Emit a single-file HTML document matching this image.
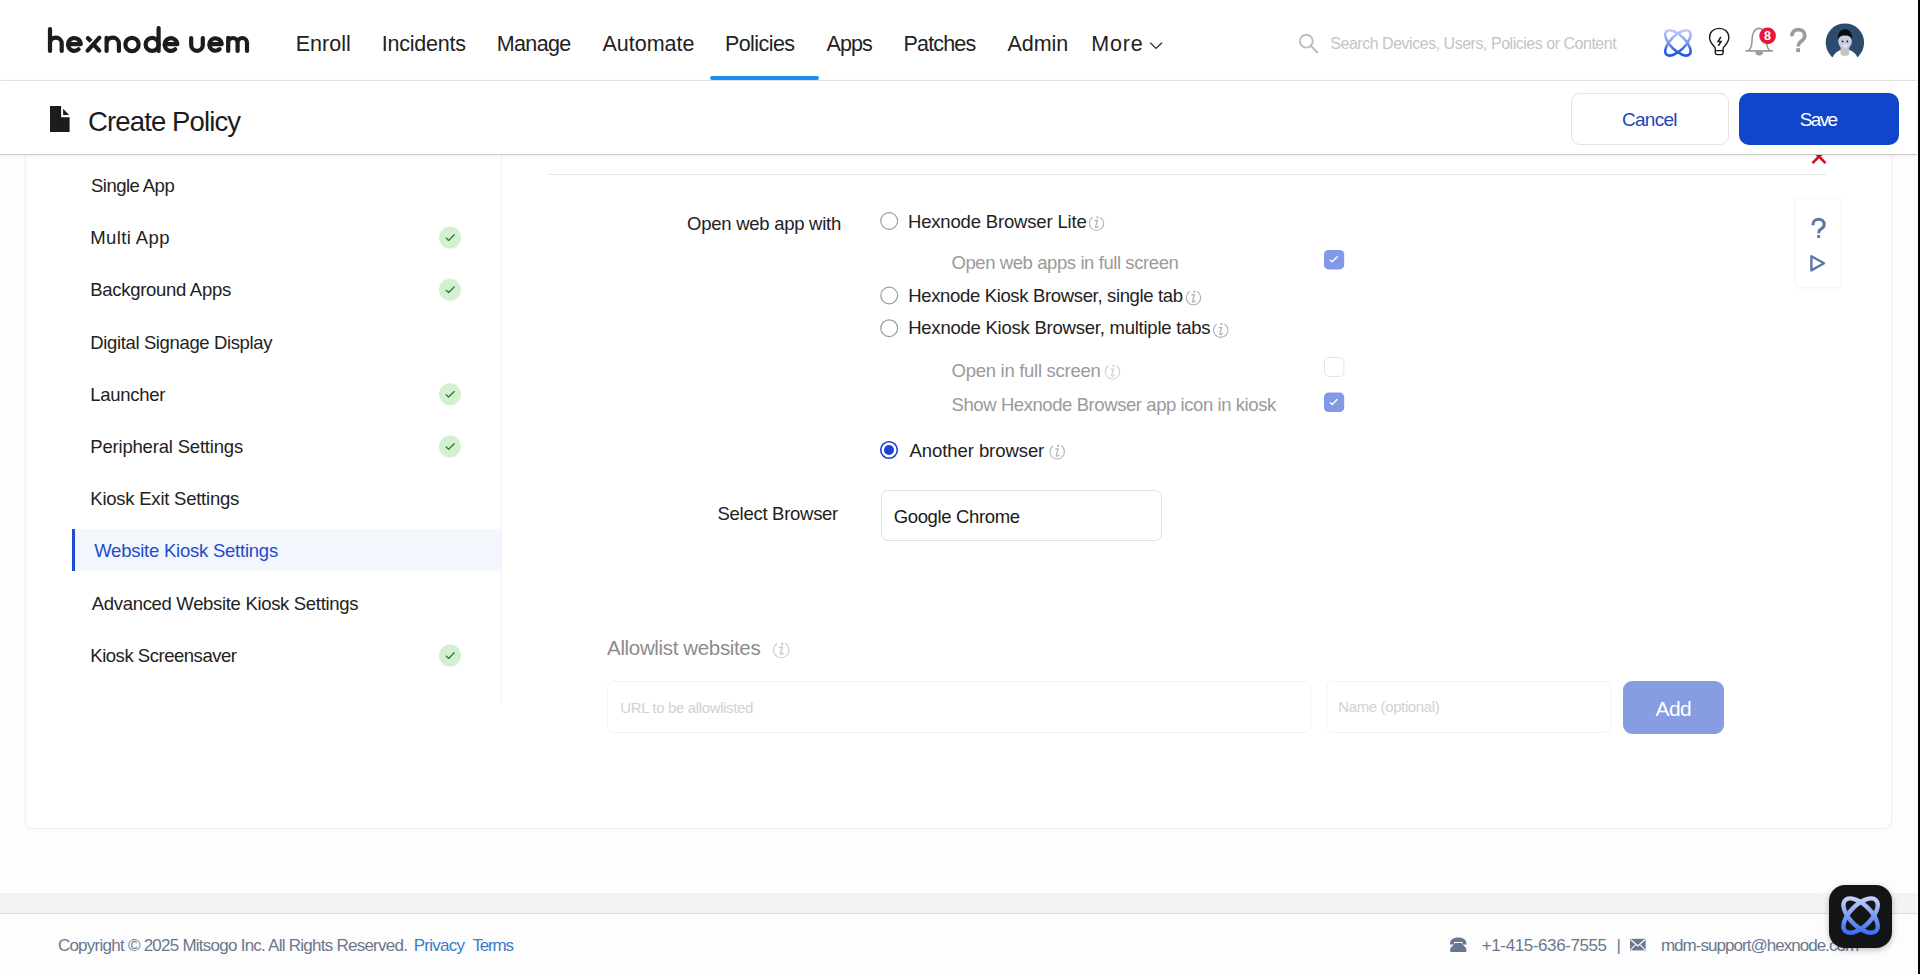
<!DOCTYPE html>
<html lang="en"><head><meta charset="utf-8"><title>Create Policy - Hexnode UEM</title>
<style>
html,body{margin:0;padding:0;}
body{width:1920px;height:974px;overflow:hidden;position:relative;background:#fdfdfd;font-family:"Liberation Sans",sans-serif;}
.a{position:absolute;box-sizing:border-box;}
.t{position:absolute;white-space:nowrap;line-height:1;font-family:"Liberation Sans",sans-serif;}
svg{position:absolute;overflow:visible;}
</style></head>
<body>
<!-- content card -->
<div class="a" style="left:25px;top:60px;width:1867px;height:769px;background:#fff;border:1px solid #efefef;border-radius:8px;box-shadow:0 0 2px rgba(0,0,0,0.05);"></div>
<!-- sidebar -->
<div class="a" style="left:501px;top:154px;width:1px;height:550px;background:#f2f2f2;"></div>
<div class="a" style="left:72px;top:529px;width:429px;height:42px;background:#f3f6fd;"></div>
<div class="a" style="left:72px;top:529px;width:3px;height:42px;background:#1f4bd6;"></div>
<svg width="1920" height="974" style="left:0;top:0;">
  <g fill="#d3f1d1">
    <circle cx="450" cy="237.6" r="11"/>
    <circle cx="450" cy="289.8" r="11"/>
    <circle cx="450" cy="394.3" r="11"/>
    <circle cx="450" cy="446.5" r="11"/>
    <circle cx="450" cy="655.6" r="11"/>
  </g>
  <g fill="none" stroke="#2f7d3c" stroke-width="1.35" stroke-linecap="round" stroke-linejoin="round">
    <path d="M446.2,238.1 L448.6,240.4 L454.2,234.8"/>
    <path d="M446.2,290.3 L448.6,292.6 L454.2,287.0"/>
    <path d="M446.2,394.8 L448.6,397.1 L454.2,391.5"/>
    <path d="M446.2,447.0 L448.6,449.3 L454.2,443.7"/>
    <path d="M446.2,656.1 L448.6,658.4 L454.2,652.8"/>
  </g>
</svg>
<!-- form -->
<div class="a" style="left:548px;top:174px;width:1278px;height:1px;background:#e4e4e4;"></div>
<svg width="1920" height="974" style="left:0;top:0;">
  <g fill="#fff" stroke="#9c9c9c" stroke-width="1.2">
    <circle cx="889.2" cy="221" r="8.4"/>
    <circle cx="889.2" cy="295.5" r="8.4"/>
    <circle cx="889.2" cy="328.2" r="8.4"/>
  </g>
  <circle cx="889" cy="450" r="8.3" fill="#fff" stroke="#1a45d4" stroke-width="1.6"/>
  <circle cx="889" cy="450" r="5" fill="#1a45d4"/>
  <!-- checkboxes -->
  <rect x="1324" y="250" width="20.2" height="19.4" rx="4.5" fill="#8199e6"/>
  <rect x="1324" y="392.6" width="20.2" height="19.4" rx="4.5" fill="#8199e6"/>
  <rect x="1324.5" y="357.5" width="19.4" height="19" rx="4.5" fill="#fff" stroke="#e2e2e2" stroke-width="1"/>
  <g fill="none" stroke="#fff" stroke-width="1.4" stroke-linecap="round" stroke-linejoin="round">
    <path d="M1330.2,260.1 L1332.2,261.8 L1337.2,256.8"/>
    <path d="M1330.2,402.7 L1332.2,404.4 L1337.2,399.4"/>
  </g>
</svg>
<div class="a" style="left:880.5px;top:490.2px;width:281px;height:50.6px;border:1px solid #e2e2e2;border-radius:7px;background:#fff;"></div>
<div class="a" style="left:607px;top:681.2px;width:704px;height:51.6px;border:1px solid #f3f3f3;border-radius:7px;background:#fff;"></div>
<div class="a" style="left:1325.6px;top:681.2px;width:286px;height:51.4px;border:1px solid #f3f3f3;border-radius:7px;background:#fff;"></div>
<div class="a" style="left:1623px;top:681.2px;width:100.5px;height:53.2px;border-radius:9px;background:#869de2;"></div>
<!-- help box -->
<div class="a" style="left:1795px;top:198px;width:46px;height:90px;border:1px solid #f6f6f6;border-radius:3px;background:#fff;box-shadow:0 0 4px rgba(0,0,0,0.035);"></div>
<svg width="1920" height="974" style="left:0;top:0;">
  <path d="M1812.9,225.2 C1812.9,221.2 1815.4,219.3 1818.5,219.3 C1821.8,219.3 1824.2,221.3 1824.2,224.4 C1824.2,227.4 1821.9,228.4 1820.3,229.6 C1819.1,230.5 1818.6,231.3 1818.6,233.3" fill="none" stroke="#5a7aa5" stroke-width="3.1"/>
  <rect x="1817.2" y="235" width="2.9" height="3" fill="#5a7aa5"/>
  <path d="M1811.4,256.3 L1824,263.3 L1811.4,270.4 Z" fill="none" stroke="#5a7aa5" stroke-width="2.4" stroke-linejoin="round"/>
</svg>
<!-- gray band + footer -->
<div class="a" style="left:0;top:893px;width:1917px;height:21px;background:#f3f3f3;border-bottom:1px solid #dcdcdc;"></div>
<div class="a" style="left:0;top:914px;width:1917px;height:60px;background:#fdfdfd;"></div>
<svg width="1920" height="974" style="left:0;top:0;">
  <!-- phone -->
  <path d="M1450,944.5 C1450,939.5 1453,937.5 1458.2,937.5 C1463.4,937.5 1466.5,939.5 1466.5,944.5 L1462.5,944.5 L1462.5,942 L1454,942 L1454,944.5 Z" fill="#6a788f"/>
  <path d="M1455,943 L1461.5,943 L1466.3,948.5 L1466.3,952 L1450.2,952 L1450.2,948.5 Z" fill="#6a788f"/>
  <!-- mail -->
  <rect x="1630" y="938.8" width="15.6" height="11.6" fill="#6a788f"/>
  <path d="M1630.6,939.6 L1637.8,946 L1645,939.6" fill="none" stroke="#fdfdfd" stroke-width="1.3"/>
  <path d="M1630.6,949.8 L1635.6,944.6 M1645,949.8 L1640,944.6" fill="none" stroke="#fdfdfd" stroke-width="1.1"/>
</svg>
<!-- red X (under sub header) -->
<svg width="1920" height="974" style="left:0;top:0;">
  <path d="M1812.5,150 L1825.5,163.2 M1825.5,150 L1812.5,163.2" stroke="#e0091c" stroke-width="2.6" fill="none"/>
</svg>
<!-- header -->
<div class="a" style="left:0;top:0;width:1917px;height:81px;background:#fff;border-bottom:1px solid #e4e4e4;"></div>
<div class="a" style="left:710px;top:76px;width:109px;height:4px;border-radius:2px;background:#1e8ff0;"></div>
<!-- sub header -->
<div class="a" style="left:0;top:81px;width:1917px;height:74px;background:#fff;border-bottom:1px solid #c9c9c9;box-shadow:0 1px 4px rgba(0,0,0,0.07);"></div>
<div class="a" style="left:1571px;top:93.4px;width:158px;height:51.2px;border:1px solid #e3e3e3;border-radius:9px;background:#fff;"></div>
<div class="a" style="left:1739px;top:93px;width:159.6px;height:51.6px;border-radius:10px;background:#0f46ca;"></div>
<svg width="1920" height="974" style="left:0;top:0;">
  <!-- logo -->
  <g fill="none" stroke="#1c1c1c" stroke-width="4.2" stroke-linecap="round" stroke-linejoin="round">
    <path d="M50,29 V51 M50,51 V43.5 A5.85,5.85 0 0 1 61.7,43.5 V51"/>
    <path d="M68,44.2 H80.75 A6.4,6.4 0 1 0 78.6,49.3"/>
    <path d="M87.6,50.6 L99.4,37.7 M93.4,44.1 L99.2,50.6"/><path d="M87.9,38.2 L91.1,41.3" stroke-linecap="butt"/><circle cx="87.9" cy="38.2" r="2.1" fill="#1c1c1c" stroke="none"/>
    <path d="M106.6,37.8 V51 M106.6,43.8 A6.15,6.15 0 0 1 118.9,43.8 V51"/>
    <circle cx="132" cy="44.45" r="6.65"/>
    <circle cx="152.1" cy="44.45" r="6.5"/>
    <path d="M158.6,28.1 V50.9"/>
    <path d="M164.6,44.2 H177.3 A6.35,6.35 0 1 0 175.2,49.3"/>
    <path d="M191.2,38.1 V45 A5.8,5.8 0 0 0 202.8,45 V38.1"/>
    <path d="M209.3,44.2 H221.7 A6.2,6.2 0 1 0 219.6,49.2"/>
    <path d="M228.2,37.9 V51 M228.2,42.7 A4.7,4.7 0 0 1 237.6,42.7 V51 M237.6,42.7 A4.7,4.7 0 0 1 247,42.7 V51"/>
  </g>
  <!-- nav chevron -->
  <path d="M1150.2,42.8 L1156.1,48.4 L1162,42.8" fill="none" stroke="#333" stroke-width="1.4"/>
  <!-- search icon -->
  <circle cx="1306.3" cy="41.2" r="6.4" fill="none" stroke="#bcbcbc" stroke-width="1.9"/>
  <path d="M1310.9,46 L1317.2,52.3" stroke="#bcbcbc" stroke-width="2.1" stroke-linecap="round"/>
  <!-- doc icon -->
  <path d="M50,106 H61.1 V117.2 H69.6 V132 H50 Z" fill="#1c1c1c"/>
  <path d="M63.1,108.8 L69.1,114.9 H63.1 Z" fill="#1c1c1c"/>
  <!-- atom -->
  <defs>
    <linearGradient id="ag" gradientUnits="userSpaceOnUse" x1="0" y1="29" x2="0" y2="57" gradientTransform="rotate(-45 1677.9 42.9)">
      <stop offset="0" stop-color="#c3d0f7"/>
      <stop offset="0.45" stop-color="#7fa0ef"/>
      <stop offset="0.75" stop-color="#2f62e6"/>
      <stop offset="1" stop-color="#1d55ec"/>
    </linearGradient>
    <linearGradient id="ag2" gradientUnits="userSpaceOnUse" x1="0" y1="29" x2="0" y2="57" gradientTransform="rotate(45 1677.9 42.9)">
      <stop offset="0" stop-color="#c3d0f7"/>
      <stop offset="0.45" stop-color="#7fa0ef"/>
      <stop offset="0.75" stop-color="#2f62e6"/>
      <stop offset="1" stop-color="#1d55ec"/>
    </linearGradient>
  </defs>
  <g fill="none" stroke-width="2.6">
    <ellipse cx="1677.9" cy="42.9" rx="16.3" ry="7.4" transform="rotate(45 1677.9 42.9)" stroke="url(#ag)"/>
    <ellipse cx="1677.9" cy="42.9" rx="16.3" ry="7.4" transform="rotate(-45 1677.9 42.9)" stroke="url(#ag2)"/>
  </g>
  <!-- bulb -->
  <g fill="none" stroke="#1a1a1a" stroke-width="1.4" stroke-linejoin="round" stroke-linecap="round">
    <path d="M1715.3,52.5 V48.4 C1715.3,46.6 1709.6,43.6 1709.6,37.5 C1709.6,31.9 1713.9,28.4 1719.2,28.4 C1724.5,28.4 1728.8,31.9 1728.8,37.5 C1728.8,43.6 1723.1,46.6 1723.1,48.4 V52.5 C1723.1,54 1722.3,54.6 1721,54.6 H1717.4 C1716.1,54.6 1715.3,54 1715.3,52.5 Z"/>
    <path d="M1715.5,50.6 H1722.9"/>
  </g>
  <path d="M1720.9,36.9 L1718.1,41.4 H1721.1 L1718.3,45.8" fill="none" stroke="#1a1a1a" stroke-width="1.5" stroke-linejoin="miter"/>
  <!-- bell -->
  <path d="M1748.6,50.2 C1751.3,48.6 1752,45 1752,40 C1752,33 1754.8,28.4 1759.2,28.4 C1763.6,28.4 1766.4,33 1766.4,40 C1766.4,45 1767.1,48.6 1769.8,50.2" fill="none" stroke="#9b9b9b" stroke-width="1.6"/>
  <path d="M1746.2,50.8 H1772.2" stroke="#9b9b9b" stroke-width="1.8" stroke-linecap="round"/>
  <path d="M1755.3,51.5 A3.9,3.9 0 0 0 1763.1,51.5 Z" fill="#9b9b9b"/>
  <circle cx="1767.6" cy="35.9" r="8.3" fill="#e5173a"/>
  <text x="1767.6" y="40.3" text-anchor="middle" font-family="Liberation Sans" font-weight="bold" font-size="12.5" fill="#fff">8</text>
  <!-- question -->
  <path d="M1791.9,36.2 C1791.9,31.4 1795,29.6 1798.1,29.6 C1801.9,29.6 1804.8,32 1804.8,35.6 C1804.8,39.4 1801.9,40.6 1800.2,42.1 C1798.7,43.4 1798.2,44.3 1798.2,46.6" fill="none" stroke="#9b9b9b" stroke-width="3.7"/>
  <rect x="1796.2" y="48.2" width="3.8" height="3.8" fill="#9b9b9b"/>
  <!-- avatar -->
  <circle cx="1844.9" cy="42.6" r="19.2" fill="#2c4b6d"/>
  <circle cx="1845" cy="62.6" r="13.4" fill="#fff"/>
  <path d="M1840.6,47 H1849.2 V53.5 C1849.2,55 1847.5,55.8 1844.9,55.8 C1842.3,55.8 1840.6,55 1840.6,53.5 Z" fill="#c2c4c6"/>
  <path d="M1838.2,40 C1838.2,45.5 1840.8,48.9 1845,48.9 C1849.2,48.9 1851.9,45.5 1851.9,40 C1851.9,35.5 1849.2,32.5 1845,32.5 C1840.8,32.5 1838.2,35.5 1838.2,40 Z" fill="#c9cde0"/>
  <path d="M1838,40.5 C1837.2,33.5 1840.5,29.2 1845,29.2 C1849.5,29.2 1852.8,33.5 1852,40.5 C1851.2,37 1849.5,35.5 1845,35.5 C1840.5,35.5 1838.8,37 1838,40.5 Z" fill="#0d0d10"/>
  <circle cx="1842.6" cy="41.4" r="0.9" fill="#111"/>
  <circle cx="1847.3" cy="41.4" r="0.9" fill="#111"/>
  <path d="M1842.4,45.2 Q1845,47.6 1847.6,45.2 Z" fill="#fff"/>
</svg>
<span class="t" style="left:295.70px;top:34.00px;font-size:21.5px;letter-spacing:0.022px;color:#222;">Enroll</span>
<span class="t" style="left:381.70px;top:34.00px;font-size:21.5px;letter-spacing:-0.225px;color:#222;">Incidents</span>
<span class="t" style="left:496.80px;top:34.00px;font-size:21.5px;letter-spacing:-0.648px;color:#222;">Manage</span>
<span class="t" style="left:602.40px;top:34.00px;font-size:21.5px;letter-spacing:0.019px;color:#222;">Automate</span>
<span class="t" style="left:724.90px;top:34.00px;font-size:21.5px;letter-spacing:-0.562px;color:#222;">Policies</span>
<span class="t" style="left:826.60px;top:34.00px;font-size:21.5px;letter-spacing:-0.952px;color:#222;">Apps</span>
<span class="t" style="left:903.50px;top:34.00px;font-size:21.5px;letter-spacing:-0.823px;color:#222;">Patches</span>
<span class="t" style="left:1007.60px;top:34.00px;font-size:21.5px;letter-spacing:-0.096px;color:#222;">Admin</span>
<span class="t" style="left:1091.30px;top:34.00px;font-size:21.5px;letter-spacing:0.791px;color:#222;">More</span>
<span class="t" style="left:1330.30px;top:36.00px;font-size:16px;letter-spacing:-0.477px;color:#c4c4c4;">Search Devices, Users, Policies or Content</span>
<span class="t" style="left:88.11px;top:108.00px;font-size:27.5px;letter-spacing:-0.887px;color:#1c1c1c;">Create Policy</span>
<span class="t" style="left:1621.90px;top:110.00px;font-size:19px;letter-spacing:-0.704px;color:#1b45bd;">Cancel</span>
<span class="t" style="left:1799.80px;top:110.00px;font-size:19px;letter-spacing:-1.680px;color:#ffffff;">Save</span>
<span class="t" style="left:91.00px;top:177.00px;font-size:18.5px;letter-spacing:-0.533px;color:#222;">Single App</span>
<span class="t" style="left:90.30px;top:229.00px;font-size:18.5px;letter-spacing:0.397px;color:#222;">Multi App</span>
<span class="t" style="left:90.30px;top:281.00px;font-size:18.5px;letter-spacing:-0.299px;color:#222;">Background Apps</span>
<span class="t" style="left:90.30px;top:334.00px;font-size:18.5px;letter-spacing:-0.368px;color:#222;">Digital Signage Display</span>
<span class="t" style="left:90.30px;top:386.00px;font-size:18.5px;letter-spacing:-0.283px;color:#222;">Launcher</span>
<span class="t" style="left:90.30px;top:438.00px;font-size:18.5px;letter-spacing:-0.192px;color:#222;">Peripheral Settings</span>
<span class="t" style="left:90.30px;top:490.00px;font-size:18.5px;letter-spacing:-0.236px;color:#222;">Kiosk Exit Settings</span>
<span class="t" style="left:94.20px;top:542.00px;font-size:18.5px;letter-spacing:-0.234px;color:#1d4ccc;">Website Kiosk Settings</span>
<span class="t" style="left:91.80px;top:595.00px;font-size:18.5px;letter-spacing:-0.321px;color:#222;">Advanced Website Kiosk Settings</span>
<span class="t" style="left:90.30px;top:647.00px;font-size:18.5px;letter-spacing:-0.473px;color:#222;">Kiosk Screensaver</span>
<span class="t" style="left:687.10px;top:215.00px;font-size:18.5px;letter-spacing:-0.268px;color:#222;">Open web app with</span>
<span class="t" style="left:908.00px;top:213.00px;font-size:18.5px;letter-spacing:-0.175px;color:#222;">Hexnode Browser Lite</span>
<span class="t" style="left:951.50px;top:254.00px;font-size:18.5px;letter-spacing:-0.418px;color:#9a9a9a;">Open web apps in full screen</span>
<span class="t" style="left:908.20px;top:287.00px;font-size:18.5px;letter-spacing:-0.343px;color:#222;">Hexnode Kiosk Browser, single tab</span>
<span class="t" style="left:908.20px;top:319.00px;font-size:18.5px;letter-spacing:-0.234px;color:#222;">Hexnode Kiosk Browser, multiple tabs</span>
<span class="t" style="left:951.60px;top:362.00px;font-size:18.5px;letter-spacing:-0.287px;color:#9a9a9a;">Open in full screen</span>
<span class="t" style="left:951.60px;top:396.00px;font-size:18.5px;letter-spacing:-0.425px;color:#9a9a9a;">Show Hexnode Browser app icon in kiosk</span>
<span class="t" style="left:909.50px;top:442.00px;font-size:18.5px;letter-spacing:-0.069px;color:#222;">Another browser</span>
<span class="t" style="left:717.50px;top:505.00px;font-size:18.5px;letter-spacing:-0.280px;color:#222;">Select Browser</span>
<span class="t" style="left:893.70px;top:508.00px;font-size:18.5px;letter-spacing:-0.350px;color:#1a1a1a;">Google Chrome</span>
<span class="t" style="left:607.10px;top:638.00px;font-size:20.5px;letter-spacing:-0.350px;color:#8c8c8c;">Allowlist websites</span>
<span class="t" style="left:620.20px;top:700.00px;font-size:15px;letter-spacing:-0.358px;color:#d2d2d2;">URL to be allowlisted</span>
<span class="t" style="left:1338.30px;top:699.00px;font-size:15px;letter-spacing:-0.380px;color:#d2d2d2;">Name (optional)</span>
<span class="t" style="left:1655.60px;top:698.00px;font-size:21px;letter-spacing:-0.643px;color:#ffffff;">Add</span>
<span class="t" style="left:57.90px;top:937.00px;font-size:17px;letter-spacing:-0.749px;color:#6a788f;">Copyright © 2025 Mitsogo Inc. All Rights Reserved.</span>
<span class="t" style="left:413.70px;top:937.00px;font-size:17px;letter-spacing:-0.739px;color:#3b7bc8;">Privacy</span>
<span class="t" style="left:472.40px;top:937.00px;font-size:17px;letter-spacing:-1.194px;color:#3b7bc8;">Terms</span>
<span class="t" style="left:1481.80px;top:937.00px;font-size:17px;letter-spacing:-0.404px;color:#6a788f;">+1-415-636-7555</span>
<span class="t" style="left:1616.50px;top:937.00px;font-size:17px;letter-spacing:0.000px;color:#6a788f;">|</span>
<span class="t" style="left:1660.90px;top:937.00px;font-size:17px;letter-spacing:-0.968px;color:#6a788f;">mdm-support@hexnode.com</span>
<!-- info icons -->
<svg width="1920" height="974" style="left:0;top:0;">
<path d="M1100.32,217.19 A7.2,7.2 0 1 1 1092.68,217.19" fill="none" stroke="#b0b3bd" stroke-width="1.1"/><circle cx="1097.40" cy="217.30" r="1.15" fill="#b0b3bd"/><path d="M1094.90,220.70 L1097.40,220.40 L1095.60,226.90 C1095.40,227.90 1096.70,228.10 1098.30,226.60" fill="none" stroke="#b0b3bd" stroke-width="1.3" stroke-linejoin="round" stroke-linecap="round"/>
<path d="M1197.32,291.49 A7.2,7.2 0 1 1 1189.68,291.49" fill="none" stroke="#b0b3bd" stroke-width="1.1"/><circle cx="1194.40" cy="291.60" r="1.15" fill="#b0b3bd"/><path d="M1191.90,295.00 L1194.40,294.70 L1192.60,301.20 C1192.40,302.20 1193.70,302.40 1195.30,300.90" fill="none" stroke="#b0b3bd" stroke-width="1.3" stroke-linejoin="round" stroke-linecap="round"/>
<path d="M1224.52,324.09 A7.2,7.2 0 1 1 1216.88,324.09" fill="none" stroke="#b0b3bd" stroke-width="1.1"/><circle cx="1221.60" cy="324.20" r="1.15" fill="#b0b3bd"/><path d="M1219.10,327.60 L1221.60,327.30 L1219.80,333.80 C1219.60,334.80 1220.90,335.00 1222.50,333.50" fill="none" stroke="#b0b3bd" stroke-width="1.3" stroke-linejoin="round" stroke-linecap="round"/>
<path d="M1116.32,365.69 A7.2,7.2 0 1 1 1108.68,365.69" fill="none" stroke="#cfd1d6" stroke-width="1.1"/><circle cx="1113.40" cy="365.80" r="1.15" fill="#cfd1d6"/><path d="M1110.90,369.20 L1113.40,368.90 L1111.60,375.40 C1111.40,376.40 1112.70,376.60 1114.30,375.10" fill="none" stroke="#cfd1d6" stroke-width="1.3" stroke-linejoin="round" stroke-linecap="round"/>
<path d="M1061.02,445.69 A7.2,7.2 0 1 1 1053.38,445.69" fill="none" stroke="#b0b3bd" stroke-width="1.1"/><circle cx="1058.10" cy="445.80" r="1.15" fill="#b0b3bd"/><path d="M1055.60,449.20 L1058.10,448.90 L1056.30,455.40 C1056.10,456.40 1057.40,456.60 1059.00,455.10" fill="none" stroke="#b0b3bd" stroke-width="1.3" stroke-linejoin="round" stroke-linecap="round"/>
<path d="M785.43,643.29 A7.8,7.8 0 1 1 777.17,643.29" fill="none" stroke="#c6c8ce" stroke-width="1.1"/><circle cx="782.20" cy="643.90" r="1.15" fill="#c6c8ce"/><path d="M779.70,647.30 L782.20,647.00 L780.40,653.50 C780.20,654.50 781.50,654.70 783.10,653.20" fill="none" stroke="#c6c8ce" stroke-width="1.3" stroke-linejoin="round" stroke-linecap="round"/>
</svg>
<!-- scrollbar edge -->
<div class="a" style="left:1918px;top:0;width:2px;height:974px;background:#000;"></div>
<!-- chat button -->
<div class="a" style="left:1829.4px;top:884.7px;width:62.4px;height:63px;border-radius:16px;background:#131416;box-shadow:0 2px 6px rgba(0,0,0,0.25);"></div>
<svg width="1920" height="974" style="left:0;top:0;">
  <defs>
    <linearGradient id="cg" gradientUnits="userSpaceOnUse" x1="0" y1="894" x2="0" y2="937" gradientTransform="rotate(-45 1860.6 915.6)">
      <stop offset="0" stop-color="#d2dcfb"/>
      <stop offset="0.5" stop-color="#7d9cf3"/>
      <stop offset="1" stop-color="#2c66f0"/>
    </linearGradient>
    <linearGradient id="cg2" gradientUnits="userSpaceOnUse" x1="0" y1="894" x2="0" y2="937" gradientTransform="rotate(45 1860.6 915.6)">
      <stop offset="0" stop-color="#d2dcfb"/>
      <stop offset="0.5" stop-color="#7d9cf3"/>
      <stop offset="1" stop-color="#2c66f0"/>
    </linearGradient>
  </defs>
  <g fill="none" stroke-width="4.4">
    <ellipse cx="1860.6" cy="915.6" rx="21.8" ry="10.6" transform="rotate(45 1860.6 915.6)" stroke="url(#cg)"/>
    <ellipse cx="1860.6" cy="915.6" rx="21.8" ry="10.6" transform="rotate(-45 1860.6 915.6)" stroke="url(#cg2)"/>
  </g>
</svg>
</body></html>
